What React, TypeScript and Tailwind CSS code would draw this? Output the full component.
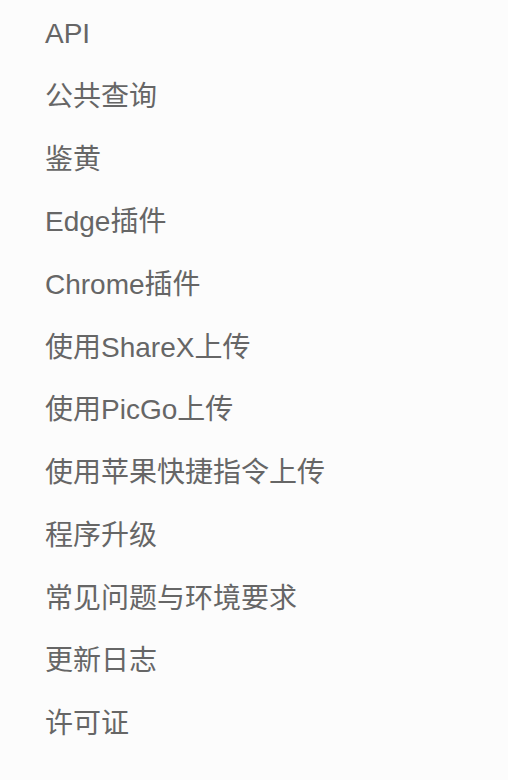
import React from 'react';

const items = [
    'API',
    '公共查询',
    '鉴黄',
    'Edge插件',
    'Chrome插件',
    '使用ShareX上传',
    '使用PicGo上传',
    '使用苹果快捷指令上传',
    '程序升级',
    '常见问题与环境要求',
    '更新日志',
    '许可证',
];

const App = () => {
    return (
        <div className="min-h-screen w-full bg-[#fcfcfc] pt-[3px] font-['Liberation_Sans','Noto_Sans_CJK_SC',sans-serif]">
            <ul className="flex flex-col pl-[45px]">
                {items.map((label) => (
                    <li key={label} className="h-[62.7px] flex items-center text-[28px] leading-none text-[#666666]">
                        {label}
                    </li>
                ))}
            </ul>
        </div>
    );
};

export default App;
